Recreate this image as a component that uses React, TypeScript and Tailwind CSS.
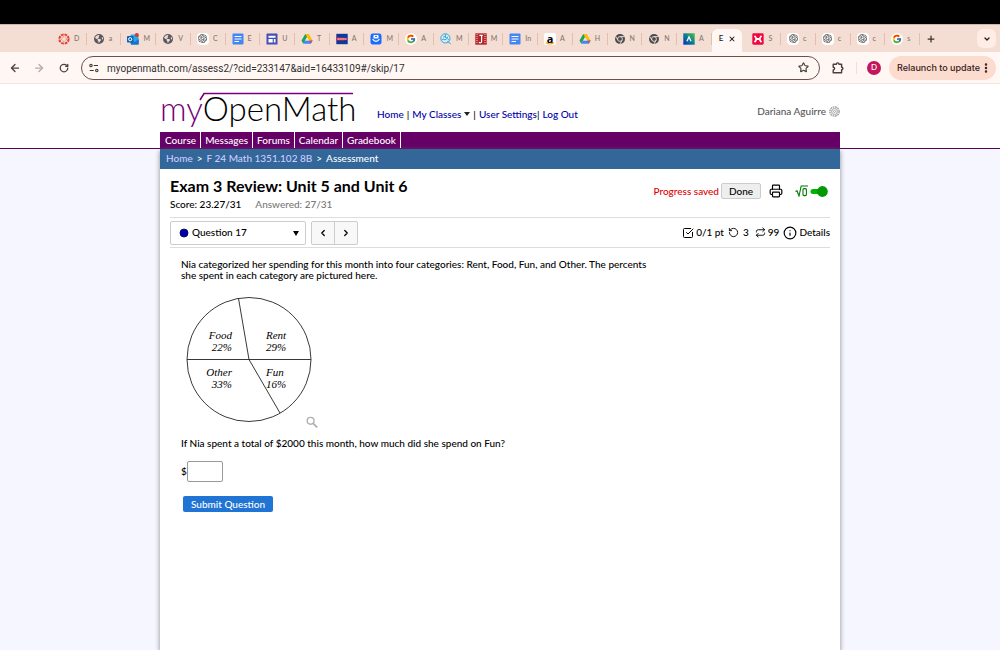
import type { ReactNode } from "react";
import { FaXmark, FaEarthAmericas } from "react-icons/fa6";
import { FcGoogle } from "react-icons/fc";
import { SiOpenai } from "react-icons/si";
import {
  ArrowLeft,
  ArrowRight,
  ChevronDown,
  ChevronLeft,
  ChevronRight,
  EllipsisVertical,
  Info,
  Plus,
  Printer,
  Repeat,
  RotateCcw,
  RotateCw,
  Search,
  SquareCheckBig,
  Star,
} from "lucide-react";

const CanvasIcon = () => (
  <svg viewBox="0 0 12 12" className="size-3">
    <circle cx="6" cy="6" r="4.6" fill="none" stroke="#e2402f" strokeWidth="2" strokeDasharray="2.7 0.9" />
    <circle cx="6" cy="6" r="2.3" fill="none" stroke="#e2402f" strokeWidth="0.8" strokeDasharray="0.8 1" />
  </svg>
);

const GlobeIcon = () => <FaEarthAmericas className="size-[10px] text-[#565a5f]" />;

const OutlookIcon = () => (
  <svg viewBox="0 0 12 12" className="size-3">
    <rect x="3.5" y="1.5" width="8" height="9.5" rx="1" fill="#28a8ea" />
    <path d="M3 6.5l4.5 2.6L11.8 6v5a.8.8 0 0 1-.8.8H4z" fill="#1476c8" />
    <rect x="0" y="3" width="6.5" height="6.5" rx="0.8" fill="#0f64b8" />
    <circle cx="3.2" cy="6.2" r="1.6" fill="none" stroke="#fff" strokeWidth="1" />
    <circle cx="9.8" cy="2" r="2" fill="#e5322d" />
  </svg>
);

const OpenAiIcon = () => (
  <span className="flex size-3 items-center justify-center rounded-sm bg-white">
    <SiOpenai className="size-[9px] text-[#333]" />
  </span>
);

const DocsIcon = () => (
  <svg viewBox="0 0 12 12" className="size-3">
    <rect x="0.5" y="0.5" width="11" height="11" rx="1" fill="#4285f4" />
    <path d="M2.5 3.5h7M2.5 6h7M2.5 8.5h4.5" stroke="#fff" strokeWidth="1.2" />
  </svg>
);

const SitesIcon = () => (
  <svg viewBox="0 0 12 12" className="size-3">
    <rect x="0.5" y="0.5" width="11" height="11" rx="0.6" fill="#4250b5" />
    <path d="M2.5 2.8h7v2h-7zM2.5 6h4.2v3.6H2.5zM7.8 6h1.7v3.6H7.8z" fill="#fff" />
  </svg>
);

const DriveIcon = () => (
  <svg viewBox="0 0 12 12" className="size-3">
    <path d="M4.2 1h3.6L4 7.7 2.2 10.8.5 7.6z" fill="#1aa260" />
    <path d="M4.2 1h3.6l3.8 6.6H8z" fill="#fbbc05" />
    <path d="M4 7.6h7.6l-1.8 3.2H2.2z" fill="#4285f4" />
    <path d="M9.2 7.6h2.4l-1.8 3.2z" fill="#ea4335" />
    <path d="M6 4.3l1.9 3.3H4.1z" fill="#f4ddd3" />
  </svg>
);

const AirlineIcon = () => (
  <svg viewBox="0 0 12 12" className="size-3">
    <rect x="0.3" y="0.8" width="11.4" height="10.4" fill="#0b3a9e" />
    <path d="M0.3 4.4h8l3.4 1.8-3.4 1.2h-8z" fill="#e0263b" />
    <path d="M1.5 6h9" stroke="#fff" strokeWidth="1.2" strokeDasharray="1.4 0.5" />
  </svg>
);

const DeputyIcon = () => (
  <svg viewBox="0 0 12 12" className="size-3">
    <rect x="0.5" y="0.5" width="11" height="11" rx="2.2" fill="#1a6dff" />
    <rect x="3.4" y="2" width="5.2" height="3.6" rx="1" fill="#fff" />
    <path d="M5 3.4h2" stroke="#1a6dff" strokeWidth="1" />
    <path d="M2.6 6.2q3.4 4.4 6.8 0" fill="none" stroke="#fff" strokeWidth="1.3" />
  </svg>
);

const GoogleIcon = () => (
  <span className="flex size-3 items-center justify-center rounded-full bg-white">
    <FcGoogle className="size-[10px]" />
  </span>
);

const BrainIcon = () => (
  <svg viewBox="0 0 12 12" className="size-3" fill="none" stroke="#39a6d6" strokeWidth="1">
    <circle cx="5.4" cy="5.4" r="4.6" fill="#d5ecf5" />
    <path d="M1.6 7.4Q3 5 4 6.4t2-.4 3.4 1.6M3 4.2q1.4-1.4 2.4 0t2.6-.2M5.4 1v4M7.4 8.4l3.4 2.4" />
  </svg>
);

const CrestIcon = () => (
  <svg viewBox="0 0 12 12" className="size-3">
    <rect x="0.3" y="0.3" width="11.4" height="11.4" fill="#b3262b" />
    <path d="M4.4 2.4h3.4M6.6 2.4v6c0 1.6-2 1.8-2.4.6" fill="none" stroke="#fff" strokeWidth="1.2" />
    <path d="M2 1v10M10 1v10" stroke="#e9b5b1" strokeWidth="1.2" strokeDasharray="1 1" />
  </svg>
);

const AmazonIcon = () => (
  <span className="relative flex size-3 items-center justify-center rounded-xs bg-white">
    <span className="font-['Open_Sans',sans-serif] text-[11px] leading-[9px] font-bold text-black">a</span>
    <svg viewBox="0 0 12 12" className="absolute inset-0 size-3">
      <path d="M2 9.8q4 2.4 8 0" fill="none" stroke="#f90" strokeWidth="1.1" />
    </svg>
  </span>
);

const ChromeIcon = () => (
  <svg viewBox="0 0 12 12" className="size-3">
    <circle cx="6" cy="6" r="5" fill="#4a4d50" />
    <circle cx="6" cy="6" r="2.4" fill="none" stroke="#f4ddd3" strokeWidth="0.9" />
    <path d="M6 3.6h4.6M3.9 7.2L1.7 3.4M8.1 7.2L6 11" stroke="#f4ddd3" strokeWidth="0.9" />
  </svg>
);

const PeakIcon = () => (
  <svg viewBox="0 0 12 12" className="size-3">
    <defs>
      <linearGradient id="peak" x1="1" y1="0" x2="0" y2="1">
        <stop offset="0.1" stopColor="#3fb54a" />
        <stop offset="0.5" stopColor="#0c7c9a" />
        <stop offset="0.9" stopColor="#0b3fae" />
      </linearGradient>
    </defs>
    <rect x="0.3" y="0.3" width="11.4" height="11.4" fill="url(#peak)" />
    <path d="M4 8.2L6 3.8l2 4.4" fill="none" stroke="#fff" strokeWidth="1.3" />
  </svg>
);

const RedXIcon = () => (
  <svg viewBox="0 0 12 12" className="size-3">
    <rect x="0.3" y="0.3" width="11.4" height="11.4" rx="1.4" fill="#f2063f" />
    <path d="M2.5 2.8Q6 6 2.5 9.2M9.5 2.8Q6 6 9.5 9.2M3.6 6h4.8" fill="none" stroke="#fff" strokeWidth="1.8" />
  </svg>
);

const TABS: { icon?: ReactNode; label: string; active?: boolean }[] = [
  { icon: <CanvasIcon />, label: "D" },
  { icon: <GlobeIcon />, label: "a" },
  { icon: <OutlookIcon />, label: "M" },
  { icon: <GlobeIcon />, label: "V" },
  { icon: <OpenAiIcon />, label: "C" },
  { icon: <DocsIcon />, label: "E" },
  { icon: <SitesIcon />, label: "U" },
  { icon: <DriveIcon />, label: "T" },
  { icon: <AirlineIcon />, label: "A" },
  { icon: <DeputyIcon />, label: "M" },
  { icon: <GoogleIcon />, label: "A" },
  { icon: <BrainIcon />, label: "M" },
  { icon: <CrestIcon />, label: "M" },
  { icon: <DocsIcon />, label: "In" },
  { icon: <AmazonIcon />, label: "A" },
  { icon: <DriveIcon />, label: "H" },
  { icon: <ChromeIcon />, label: "N" },
  { icon: <ChromeIcon />, label: "N" },
  { icon: <PeakIcon />, label: "A" },
  { label: "E", active: true },
  { icon: <RedXIcon />, label: "S" },
  { icon: <OpenAiIcon />, label: "c" },
  { icon: <OpenAiIcon />, label: "c" },
  { icon: <OpenAiIcon />, label: "c" },
  { icon: <GoogleIcon />, label: "s" },
];

const TabStrip = () => (
  <div className="flex h-7 items-center border-t border-[#c9b6ae] bg-[#f4ddd3] pr-1 pl-[52px]">
    <div className="grid h-full min-w-0 flex-1 grid-cols-[repeat(25,minmax(0,1fr))] items-end">
      {TABS.map((tab, i) =>
        tab.active ? (
          <div key={i} className="mr-1 flex h-[23px] items-center justify-between rounded-t-md bg-[#fff7f4] pr-1.5 pb-1 pl-[7px]">
            <span className="text-[8px] text-[#222]">{tab.label}</span>
            <button aria-label="Close tab">
              <FaXmark className="size-2 text-[#222]" />
            </button>
          </div>
        ) : (
          <div key={i} className="flex h-[27px] items-center">
            <div className="flex h-3 flex-1 items-center gap-1 border-r border-[#e2bfb0] pl-[6px]">
              <span className="flex w-3 shrink-0 justify-center">{tab.icon}</span>
              <span className="text-[7px] text-[#84776f]">{tab.label}</span>
            </div>
          </div>
        ),
      )}
    </div>
    <button aria-label="New tab" className="ml-1.5">
      <Plus className="size-[10px] text-[#3a302c]" strokeWidth={3} />
    </button>
    <button aria-label="Search tabs" className="ml-[41px] flex size-[19px] items-center justify-center rounded-md bg-[#ffece5]">
      <ChevronDown className="size-2 text-[#222]" strokeWidth={4} />
    </button>
  </div>
);

const Toolbar = () => (
  <div className="flex h-8 items-center border-b border-[#f3e6e0] bg-[#fff7f4] pr-1 pl-[9px] text-[#4a3f3b]">
    <button aria-label="Back">
      <ArrowLeft className="size-3" strokeWidth={2.5} />
    </button>
    <button aria-label="Forward" className="ml-3">
      <ArrowRight className="size-3 text-[#b5aaa6]" strokeWidth={2.5} />
    </button>
    <button aria-label="Reload" className="ml-3.5">
      <RotateCw className="size-[10px]" strokeWidth={3} />
    </button>
    <div className="ml-3 flex h-6 flex-1 items-center rounded-full border border-[#6b5149] px-[7px]">
      <svg viewBox="0 0 10 10" className="size-[10px]" fill="none" stroke="#3c3330" strokeWidth="1.1">
        <circle cx="2" cy="2.5" r="1.2" />
        <path d="M4.8 2.5H9M0.8 7.5h4" />
        <circle cx="7.8" cy="7.5" r="1.2" />
      </svg>
      <input
        aria-label="Address"
        defaultValue="myopenmath.com/assess2/?cid=233147&aid=16433109#/skip/17"
        className="mt-px ml-2 min-w-0 flex-1 bg-transparent font-[Roboto,sans-serif] text-[10px] font-normal text-[#33302f] outline-none"
      />
      <button aria-label="Bookmark" className="mr-[3px]">
        <Star className="size-[11px]" strokeWidth={2.5} />
      </button>
    </div>
    <button aria-label="Extensions" className="ml-3">
      <svg viewBox="0 0 12 12" className="size-3" fill="none" stroke="#4a3f3b" strokeWidth="1.4" strokeLinejoin="round">
        <path d="M1.2 2.2h3.2a1.3 1.3 0 0 1 2.6 0h2.6v3a1.3 1.3 0 0 1 0 2.6v3H1.2V8a1.4 1.4 0 0 0 0-2.8z" />
      </svg>
    </button>
    <span className="ml-3 h-3 w-px bg-[#f8dccf]" />
    <button className="ml-2.5 flex size-[14px] items-center justify-center rounded-full bg-[#c2185b] text-[8px] text-white">
      D
    </button>
    <button className="ml-2 flex h-6 items-center rounded-full bg-[#fcdccf] pr-1 pl-2 font-[Inter,sans-serif] text-[9px] text-[#33211b]">
      Relaunch to update
      <EllipsisVertical className="size-3" strokeWidth={3} />
    </button>
  </div>
);

const Logo = () => (
  <a href="#" className="relative flex w-[194px] items-end text-[33px] leading-8 font-light text-black">
    <span className="text-[#770077]">my</span>
    <span>OpenMath</span>
    <svg viewBox="0 0 194 32" className="absolute inset-0 h-8 w-[194px]" fill="none" stroke="#770077" strokeWidth="1.6">
      <path d="M40 8L44 1.5H193" />
    </svg>
  </a>
);

const Header = () => (
  <header className="mx-auto flex h-12 w-[68%] items-start">
    <div className="pt-2">
      <Logo />
    </div>
    <nav className="mt-[23px] ml-[23px] flex h-[14px] items-center text-[#0000aa]">
      <a href="#">Home</a>
      <span className="mx-[3px] text-black">|</span>
      <button className="flex items-center gap-[3px]">
        My Classes
        <svg viewBox="0 0 6 4" className="h-1 w-1.5">
          <path d="M0 0h6L3 4z" fill="#222" />
        </svg>
      </button>
      <span className="mx-[3px] text-black">|</span>
      <a href="#">User Settings</a>
      <span className="mr-[3px] text-black">|</span>
      <a href="#">Log Out</a>
    </nav>
    <div className="mt-5 ml-auto flex h-[14px] items-center gap-[3px] text-[#555]">
      Dariana Aguirre
      <svg viewBox="0 0 10 10" className="size-[11px]" fill="none" stroke="#999">
        <circle cx="5" cy="5" r="4.2" strokeWidth="1.2" strokeDasharray="1.6 0.6" />
        <circle cx="5" cy="5" r="2.6" strokeWidth="1.2" stroke="#bbb" />
        <circle cx="5" cy="5" r="0.9" strokeWidth="0.8" />
      </svg>
    </div>
  </header>
);

const NAV = ["Course", "Messages", "Forums", "Calendar", "Gradebook"];

const NavBar = () => (
  <div className="border-b border-[#550055]">
    <nav className="mx-auto flex h-4 w-[68%] bg-[#660066] pl-px">
      {NAV.map((item) => (
        <a key={item} href="#" className="flex items-center border-r border-white px-1 text-white">
          {item}
        </a>
      ))}
    </nav>
  </div>
);

const ScoreSummary = () => (
  <div className="flex h-8 items-center justify-end">
    <span className="text-[#e00000]">Progress saved</span>
    <button className="ml-0.5 h-4 w-10 rounded-xs border border-[#ccc] bg-[#eee]">Done</button>
    <button aria-label="Print" className="ml-2">
      <Printer className="size-[14px]" />
    </button>
    <label className="mr-px ml-3 flex items-center gap-0.5 text-[#007700]">
      <svg viewBox="0 0 13 12" className="h-3 w-[13px]" fill="none" stroke="#007700" strokeWidth="1.1">
        <path d="M0.5 6.5l1.5-.8L4 11 6.2 1H13" />
        <rect x="8" y="3.6" width="3.4" height="7" rx="1" />
      </svg>
      <input type="checkbox" aria-label="Equation editor" defaultChecked className="peer sr-only" />
      <svg viewBox="0 0 19 12" className="h-3 w-[19px]">
        <rect x="0.5" y="4" width="13" height="5" rx="2.5" fill="#00b300" />
        <circle cx="12.4" cy="6.5" r="5.4" fill="#009900" />
      </svg>
    </label>
  </div>
);

const QuestionBar = () => (
  <div className="flex h-[31px] items-center border-y border-[#ddd]">
    <div className="relative">
      <select
        aria-label="Question"
        className="h-6 w-[136px] appearance-none rounded-xs border border-[#ccc] bg-white pl-[21px] outline-none"
      >
        <option>Question 17</option>
      </select>
      <svg viewBox="0 0 10 10" className="pointer-events-none absolute top-[7px] left-[9px] size-[10px]">
        <circle cx="5" cy="5" r="4" fill="#0000aa" stroke="#000055" strokeWidth="0.8" />
      </svg>
      <svg viewBox="0 0 6 5" className="pointer-events-none absolute top-[10px] right-[7px] h-[5px] w-1.5">
        <path d="M0 0h6L3 5z" />
      </svg>
    </div>
    <div className="ml-[5px] flex h-6 w-[47px] rounded-xs border border-[#ccc] bg-[#f8f8f8]">
      <button aria-label="Previous question" className="flex flex-1 items-center justify-center border-r border-[#ccc]">
        <ChevronLeft className="size-[10px]" strokeWidth={3} />
      </button>
      <button aria-label="Next question" className="flex flex-1 items-center justify-center">
        <ChevronRight className="size-[10px]" strokeWidth={3} />
      </button>
    </div>
    <div className="ml-auto flex items-center">
      <SquareCheckBig className="mr-0.5 size-3" />
      0/1 pt
      <RotateCcw className="mr-1 ml-1 size-[11px]" />
      3
      <Repeat className="mr-0.5 ml-1.5 size-[11px]" />
      99
      <button className="ml-1 flex items-center gap-0.5">
        <Info className="size-[14px]" />
        Details
      </button>
    </div>
  </div>
);

const SLICES = [
  { label: "Food", pct: "22%", x: 51, y: 44, anchor: "end" },
  { label: "Rent", pct: "29%", x: 85, y: 44, anchor: "start" },
  { label: "Other", pct: "33%", x: 51, y: 81, anchor: "end" },
  { label: "Fun", pct: "16%", x: 85, y: 81, anchor: "start" },
] as const;

const PieChart = () => (
  <div className="mt-[14px] flex items-end">
    <svg viewBox="0 0 131 131" className="size-[131px]" fill="none" stroke="#222" strokeWidth="0.9">
      <circle cx="68" cy="64.5" r="62" />
      <path d="M6 64.5h124M68 64.5L57.5 3.4M68 64.5l31 53.5" />
      <g fill="#000" stroke="none" className="font-['Liberation_Serif',serif] text-[11px] italic">
        {SLICES.map((s) => (
          <g key={s.label} textAnchor={s.anchor}>
            <text x={s.x} y={s.y}>
              {s.label}
            </text>
            <text x={s.x} y={s.y + 12}>
              {s.pct}
            </text>
          </g>
        ))}
      </g>
    </svg>
    <button aria-label="Enlarge" className="-mb-0.5 -ml-1.5">
      <svg viewBox="0 0 12 12" className="size-3" fill="none" stroke="#b0b0b0" strokeWidth="1.4">
        <circle cx="4.6" cy="4.8" r="3.4" />
        <path d="M7.2 7.4l4 4" strokeWidth="1.8" />
      </svg>
    </button>
  </div>
);

const Question = () => (
  <div className="px-[11px] pt-[11px]">
    <p className="max-w-[480px]">
      Nia categorized her spending for this month into four categories: Rent, Food, Fun, and Other. The percents she
      spent in each category are pictured here.
    </p>
    <PieChart />
    <p className="mt-3">If Nia spent a total of $2000 this month, how much did she spend on Fun?</p>
    <label className="mt-3 flex items-center">
      $
      <input aria-label="Answer" className="h-[21px] w-9 rounded-xs border border-[#999] px-1 outline-none" />
    </label>
    <button className="mt-[14px] ml-0.5 h-4 rounded-xs bg-[#1f74d4] px-2 text-white">Submit Question</button>
  </div>
);

export default function App() {
  return (
    <div className="flex min-h-screen flex-col bg-white font-[Lato,sans-serif] text-[10px] leading-[11px] font-medium text-black">
      <div className="h-6 bg-black" />
      <TabStrip />
      <Toolbar />
      <Header />
      <NavBar />
      <div className="flex flex-1 flex-col bg-[#f5f6ff]">
        <main className="mx-auto w-[68%] flex-1 bg-white shadow-[0_2px_5px_#888]">
          <div className="flex h-5 items-center gap-1 bg-[#336699] px-1.5 pb-0.5 text-white">
            <a href="#" className="text-[#ccccff]">Home</a>
            &gt;
            <a href="#" className="text-[#ccccff]">F 24 Math 1351.102 8B</a>
            &gt;
            <span>Assessment</span>
          </div>
          <div className="px-[10px]">
            <div className="flex h-12 justify-between pt-1.5">
              <div>
                <h1 className="mb-0.5 text-[16px] leading-[22px] font-bold">Exam 3 Review: Unit 5 and Unit 6</h1>
                <div className="flex gap-[14px]">
                  <span>Score: 23.27/31</span>
                  <span className="text-[#777]">Answered: 27/31</span>
                </div>
              </div>
              <ScoreSummary />
            </div>
            <QuestionBar />
            <Question />
          </div>
        </main>
      </div>
    </div>
  );
}
